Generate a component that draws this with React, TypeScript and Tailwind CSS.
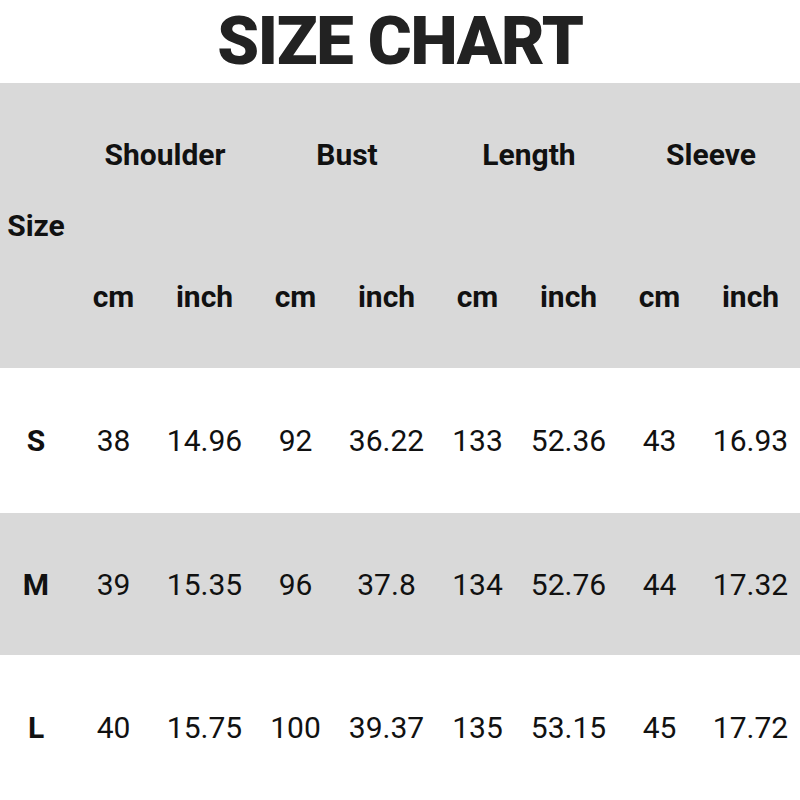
const groups = ["Shoulder", "Bust", "Length", "Sleeve"];

const rows = [
  { size: "S", values: ["38", "14.96", "92", "36.22", "133", "52.36", "43", "16.93"], shaded: false },
  { size: "M", values: ["39", "15.35", "96", "37.8", "134", "52.76", "44", "17.32"], shaded: true },
  { size: "L", values: ["40", "15.75", "100", "39.37", "135", "53.15", "45", "17.72"], shaded: false },
];

const cols = "grid w-[796px] grid-cols-[68px_repeat(8,91px)]";

export default function App() {
  return (
    <div className="h-[800px] w-[800px] bg-white font-['Roboto',sans-serif] text-[30px] text-[#111]">
      <h1 className="flex h-[83px] items-center justify-center text-[67px] font-black tracking-[-0.02em] text-[#222]">
        SIZE CHART
      </h1>

      {/* header band */}
      <div className="bg-[#d9d9d9] font-bold">
        <div className={`${cols} grid-rows-[142px_143px]`}>
          <div className="row-span-2 flex items-center justify-center pl-1">Size</div>
          {groups.map((g) => (
            <div key={g} className="col-span-2 flex items-center justify-center pl-3">
              {g}
            </div>
          ))}
          {groups.map((g) => (
            <div key={g} className="col-span-2 grid grid-cols-2">
              <span className="flex items-center justify-center">cm</span>
              <span className="flex items-center justify-center">inch</span>
            </div>
          ))}
        </div>
      </div>

      {rows.map((r, idx) => (
        <div
          key={r.size}
          className={`${r.shaded ? "bg-[#d9d9d9]" : "bg-white"} ${idx === 1 ? "h-[142px]" : "h-[145px]"}`}
        >
          <div className={`${cols} h-full`}>
            <span className="flex items-center justify-center pl-1 font-bold">{r.size}</span>
            {r.values.map((v, i) => (
              <span key={i} className="flex items-center justify-center">
                {v}
              </span>
            ))}
          </div>
        </div>
      ))}
    </div>
  );
}
